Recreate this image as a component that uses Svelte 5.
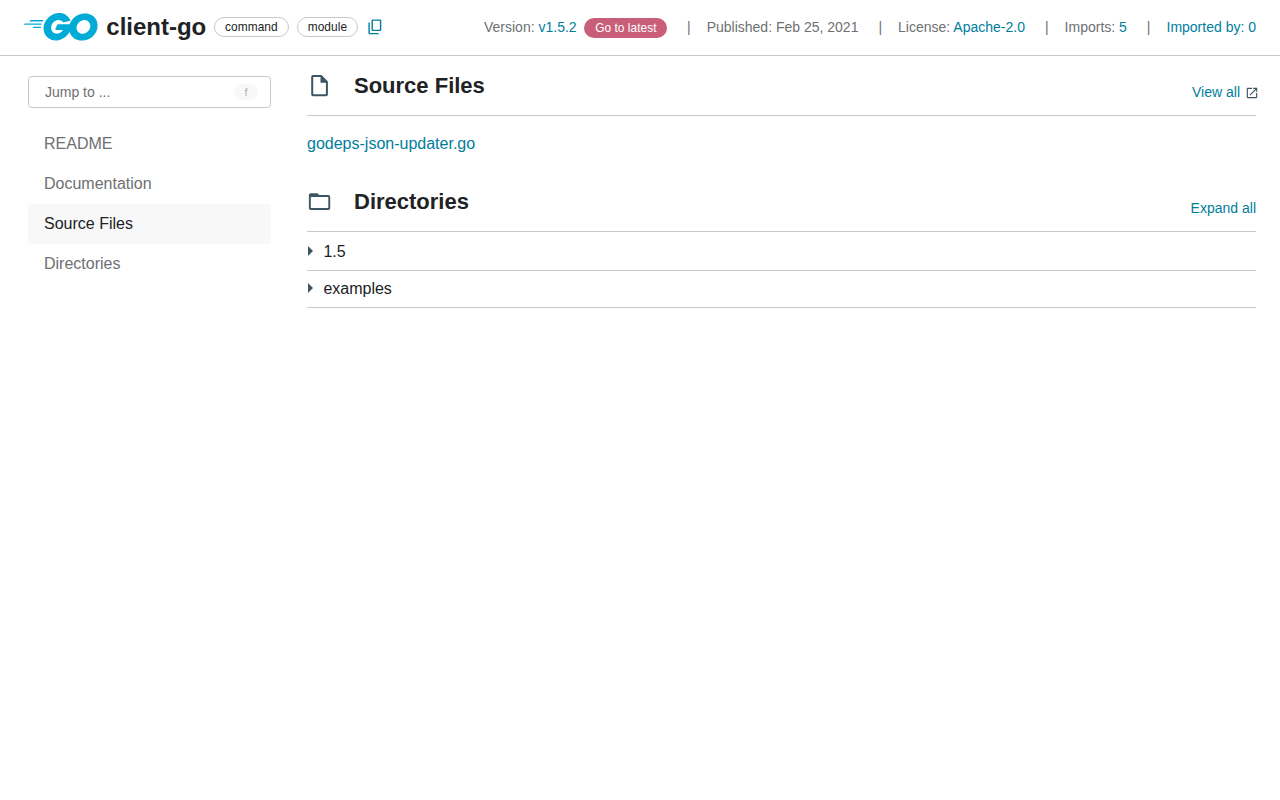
<script>
  const nav = ['README', 'Documentation', 'Source Files', 'Directories'];
  const current = 'Source Files';
  const directories = ['1.5', 'examples'];
</script>

<header>
  <svg class="logo" viewBox="24.7 78.3 205.5 76.7" aria-label="Go">
    <path d="M40.2,101.1c-0.4,0-0.5-0.2-0.3-0.5l2.1-2.7c0.2-0.3,0.7-0.5,1.1-0.5l35.7,0c0.4,0,0.5,0.3,0.3,0.6l-1.7,2.6c-0.2,0.3-0.7,0.6-1,0.6L40.2,101.1z" />
    <path d="M25.1,110.3c-0.4,0-0.5-0.2-0.3-0.5l2.1-2.7c0.2-0.3,0.7-0.5,1.1-0.5l45.6,0c0.4,0,0.6,0.3,0.5,0.6l-0.8,2.4c-0.1,0.4-0.5,0.6-0.9,0.6L25.1,110.3z" />
    <path d="M49.3,119.5c-0.4,0-0.5-0.3-0.3-0.6l1.4-2.5c0.2-0.3,0.6-0.6,1-0.6l20,0c0.4,0,0.6,0.3,0.6,0.7l-0.2,2.4c0,0.4-0.4,0.7-0.7,0.7L49.3,119.5z" />
    <path d="M153.1,99.3c-6.3,1.6-10.6,2.8-16.8,4.4c-1.5,0.4-1.6,0.5-2.9-1c-1.5-1.7-2.6-2.8-4.7-3.8c-6.3-3.1-12.4-2.2-18.1,1.5c-6.8,4.4-10.3,10.9-10.2,19c0.1,8,5.6,14.6,13.5,15.7c6.8,0.9,12.5-1.5,17-6.6c0.9-1.1,1.7-2.3,2.7-3.7c-3.6,0-8.1,0-19.3,0c-2.1,0-2.6-1.3-1.9-3c1.3-3.1,3.7-8.3,5.1-10.9c0.3-0.6,1-1.6,2.5-1.6c5.1,0,23.9,0,36.4,0c-0.2,2.7-0.2,5.4-0.6,8.1c-1.1,7.2-3.8,13.8-8.2,19.6c-7.2,9.5-16.6,15.4-28.5,17c-9.8,1.3-18.9-0.6-26.9-6.6c-7.4-5.6-11.6-13-12.7-22.2c-1.3-10.9,1.9-20.7,8.5-29.3c7.1-9.3,16.5-15.2,28-17.3c9.4-1.7,18.4-0.6,26.5,4.9c5.3,3.5,9.1,8.3,11.6,14.1C154.7,98.5,154.3,99,153.1,99.3z" />
    <path d="M186.2,154.6c-9.1-0.2-17.4-2.8-24.4-8.8c-5.9-5.1-9.6-11.6-10.8-19.3c-1.8-11.3,1.3-21.3,8.1-30.2c7.3-9.6,16.1-14.6,28-16.7c10.2-1.8,19.8-0.8,28.5,5.1c7.9,5.4,12.8,12.7,14.1,22.3c1.7,13.5-2.2,24.5-11.5,33.9c-6.6,6.7-14.7,10.9-24,12.8C191.5,154.2,188.8,154.3,186.2,154.6z M210,114.2c-0.1-1.3-0.1-2.3-0.3-3.3c-1.8-9.9-10.9-15.5-20.4-13.3c-9.3,2.1-15.3,8-17.5,17.4c-1.8,7.8,2,15.7,9.2,18.9c5.5,2.4,11,2.1,16.3-0.6C205.2,129.2,209.5,122.8,210,114.2z" />
  </svg>
  <strong class="title">client-go</strong>
  <span class="chip">command</span>
  <span class="chip">module</span>
  <svg class="copy" viewBox="0 0 14 16"><path fill-rule="evenodd" d="M4.8 0.4H12a1.3 1.3 0 0 1 1.3 1.3V10.8a1.3 1.3 0 0 1-1.3 1.3H4.8a1.3 1.3 0 0 1-1.3-1.3V1.7a1.3 1.3 0 0 1 1.3-1.3zM4.9 1.8V10.7H11.9V1.8zM0.4 3.6H1.8V13.9H10.6V15.3H1.7A1.3 1.3 0 0 1 0.4 14z" /></svg>
  <div class="details">
    <span>Version: <a href="#top">v1.5.2</a></span>
    <a class="latest" href="#top">Go to latest</a>
    <span class="sep">|</span>
    <span>Published: Feb 25, 2021</span>
    <span class="sep">|</span>
    <span>License: <a href="#top">Apache-2.0</a></span>
    <span class="sep">|</span>
    <span>Imports: <a href="#top">5</a></span>
    <span class="sep">|</span>
    <a href="#top">Imported by: 0</a>
  </div>
</header>

<div class="page">
  <aside>
    <button class="jump"><span>Jump to ...</span><kbd>f</kbd></button>
    <nav>
      {#each nav as item}
        <a href="#top" class:current={item === current}>{item}</a>
      {/each}
    </nav>
  </aside>

  <main>
    <section>
      <div class="heading">
        <svg viewBox="0 0 24 24"><path fill-rule="evenodd" d="M6 1H14.6L20.9 7.4V20.4a1.8 1.8 0 0 1-1.8 1.8H6a1.8 1.8 0 0 1-1.8-1.8V2.8a1.8 1.8 0 0 1 1.8-1.8zM6.2 3V20.2H18.9V8.7H13.5V3z" /></svg>
        <h2>Source Files</h2>
        <a class="action external" href="#top">View all<svg viewBox="0 0 24 24"><path d="M19 19H5V5h7V3H5c-1.11 0-2 .9-2 2v14c0 1.1.89 2 2 2h14c1.1 0 2-.9 2-2v-7h-2v7zM14 3v2h3.59l-9.83 9.83 1.41 1.41L19 6.41V10h2V3h-7z" /></svg></a>
      </div>
      <a class="file" href="#top">godeps-json-updater.go</a>
    </section>

    <section>
      <div class="heading">
        <svg viewBox="0 0 24 24"><path fill-rule="evenodd" d="M3.7 3.3H10.4L12.2 5.1H21.4a1.8 1.8 0 0 1 1.8 1.8V18.2a1.8 1.8 0 0 1-1.8 1.8H3.7a1.8 1.8 0 0 1-1.8-1.8V5.1a1.8 1.8 0 0 1 1.8-1.8zM3.8 7.1V18.1H21.3V7.1z" /></svg>
        <h2>Directories</h2>
        <a class="action" href="#top">Expand all</a>
      </div>
      <ul>
        {#each directories as directory}
          <li><svg viewBox="0 0 5 10"><path d="M0 0L5 5L0 10Z" /></svg>{directory}</li>
        {/each}
      </ul>
    </section>
  </main>
</div>

<style>
  :global(body) {
    margin: 0;
    background: #fff;
    color: #202224;
    font: 16px/24px 'Liberation Sans', Arial, sans-serif;
  }
  a { color: #007d9c; text-decoration: none; }
  svg { display: block; flex: none; fill: #3e5661; }

  header {
    box-sizing: border-box;
    height: 56px;
    padding: 0 24px 1px;
    border-bottom: 1px solid #c6c8ca;
    display: flex;
    align-items: center;
    white-space: nowrap;
  }
  .logo { width: 73.6px; height: 28px; fill: #00acd7; }
  .title { margin-left: 8.7px; margin-right: 7.8px; font-size: 24px; line-height: 28px; }
  .chip {
    box-sizing: border-box;
    height: 20px;
    margin-right: 8px;
    padding: 0 10px;
    border: 1px solid #c6c8ca;
    border-radius: 10px;
    font-size: 11.9px;
    letter-spacing: 0.06px;
    line-height: 18px;
  }
  .copy { width: 14px; height: 16px; margin-left: 1.6px; fill: #007d9c; }
  .details {
    margin-left: auto;
    display: flex;
    align-items: center;
    color: #6e7072;
    font-size: 14px;
  }
  .latest {
    box-sizing: border-box;
    height: 20px;
    margin: 1px 0 0 7.6px;
    padding: 0 10.5px 0 11px;
    border-radius: 10px;
    background: #c85e7a;
    color: #fff;
    font-size: 11.9px;
    letter-spacing: 0.04px;
    line-height: 20px;
  }
  .sep { margin: 0 16px 0 20px; }

  .page {
    display: grid;
    grid-template-columns: 243px 949px;
    column-gap: 36px;
    padding: 0 24px 0 28px;
  }
  aside { padding-top: 20px; }
  .jump {
    box-sizing: border-box;
    width: 100%;
    height: 32px;
    padding: 0 12px 0 16px;
    display: flex;
    align-items: center;
    justify-content: space-between;
    background: #fff;
    border: 1px solid #c6c8ca;
    border-radius: 4px;
    color: #6e7072;
    font: 14px 'Liberation Sans', Arial, sans-serif;
  }
  kbd {
    width: 24px;
    height: 16px;
    border-radius: 8px;
    background: #f8f8f8;
    color: #b0b2b4;
    font: 11px/16px 'Liberation Sans', Arial, sans-serif;
    text-align: center;
  }
  nav { display: flex; flex-direction: column; margin-top: 16px; }
  nav a { height: 40px; padding-left: 16px; line-height: 40px; color: #6e7072; }
  nav .current { background: #f8f8f8; color: #202224; }

  .heading {
    box-sizing: border-box;
    height: 60px;
    border-bottom: 1px solid #c6c8ca;
    display: flex;
    align-items: center;
  }
  .heading > svg { width: 24px; height: 24px; }
  h2 { margin: 0 auto 0 23px; font-size: 22px; line-height: 28px; }
  .action { display: flex; align-items: center; margin-top: 12px; font-size: 14px; }
  .external { margin-right: -3px; }
  .external svg { width: 14px; height: 14px; margin: 2px 0 0 5px; }
  .file { display: block; margin: 16px 0 16px; }
  ul { margin: 0; padding: 0; list-style: none; }
  li {
    box-sizing: border-box;
    height: 37px;
    display: flex;
    align-items: center;
    border-bottom: 1px solid #c6c8ca;
  }
  li:first-child { height: 39px; padding-top: 2px; }
  li svg { width: 5px; height: 10px; margin: 0 10.4px 2px 1px; }
</style>
